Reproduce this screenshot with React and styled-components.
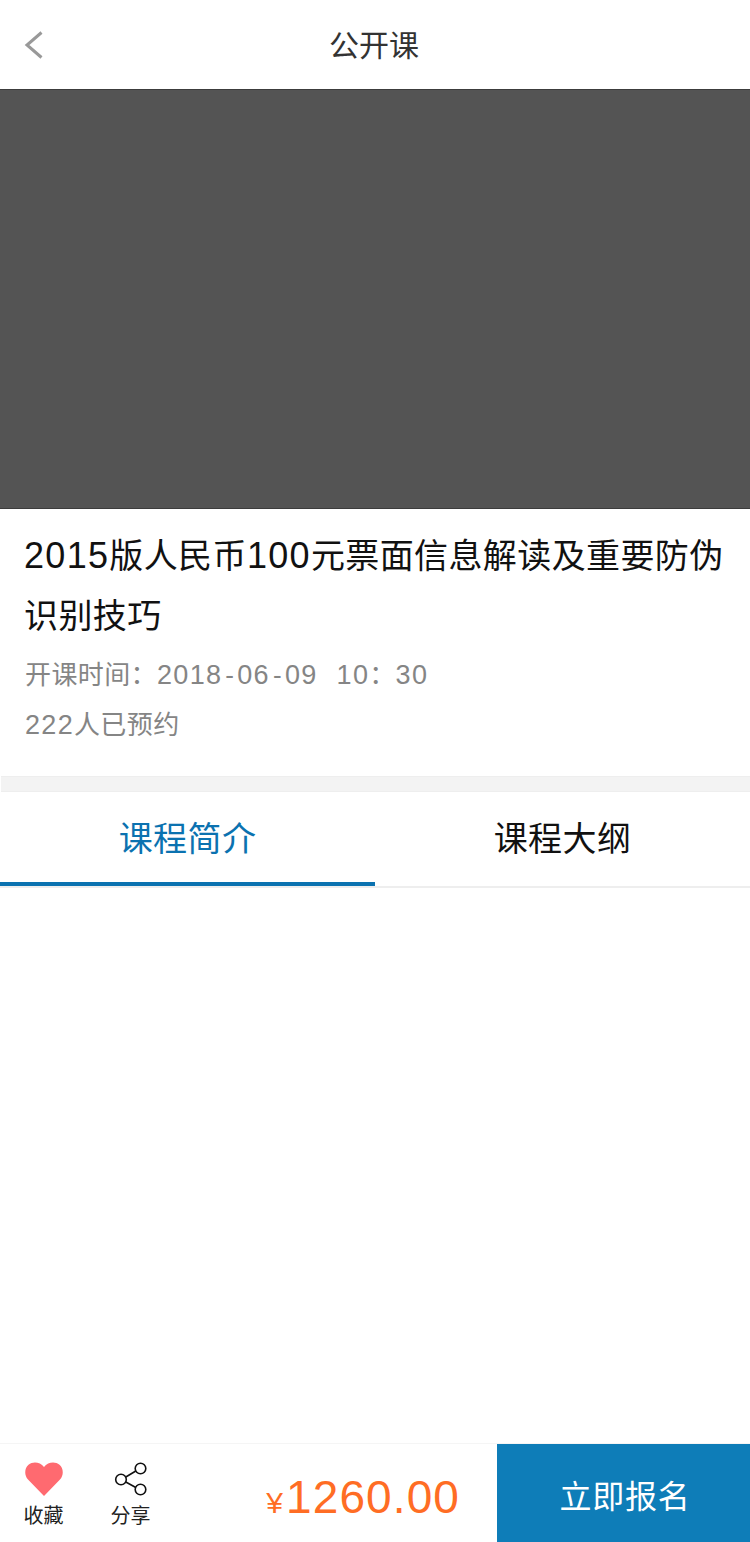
import styled, { createGlobalStyle } from "styled-components";

const GlobalStyle = createGlobalStyle`
    html, body {
        margin: 0;
        padding: 0;
        background: #fff;
    }
    body {
        font-family: "Liberation Sans", "Noto Sans CJK SC", sans-serif;
    }
`

function App() {
    return (
        <Page>
            <GlobalStyle />
            <NavBar>
                <BackIcon viewBox="0 0 20 30" fill="none">
                    <path d="M17.5 2.5 L3 15 L17.5 27.5" stroke="#999" strokeWidth="3" />
                </BackIcon>
                <NavTitle>公开课</NavTitle>
            </NavBar>
            <Hero />
            <Info>
                <Title>
                    <TitleNum>2015</TitleNum>版人民币<TitleNum>100</TitleNum>元票面信息解读及重要防伪识别技巧
                </Title>
                <Meta>
                    开课时间：<MetaNum>2018</MetaNum><Dash>-</Dash><MetaNum>06</MetaNum><Dash>-</Dash><MetaNum>09</MetaNum>
                    <Gap />
                    <MetaNum>10</MetaNum>：<MetaNum>30</MetaNum>
                </Meta>
                <Meta><MetaNum>222</MetaNum>人已预约</Meta>
            </Info>
            <Divider />
            <Tabs>
                <Tab $active>课程简介</Tab>
                <Tab>课程大纲</Tab>
            </Tabs>
            <Content />
            <BottomBar>
                <Action>
                    <svg width="38" height="34" viewBox="0 0 38 34">
                        <path d="M19 34 L3 17.5 C-1 13 -0.5 6 3.5 2.8 C8 -0.8 15 0 19 5 C23 0 30 -0.8 34.5 2.8 C38.5 6 39 13 35 17.5 Z" fill="#ff6a70" />
                    </svg>
                    <ActionLabel>收藏</ActionLabel>
                </Action>
                <Action>
                    <svg width="34" height="34" viewBox="0 0 34 34" fill="none" stroke="#111" strokeWidth="1.6">
                        <circle cx="7" cy="17.5" r="5.3" />
                        <circle cx="26.5" cy="6.5" r="5.3" />
                        <circle cx="26.5" cy="27.5" r="5.3" />
                        <path d="M11.8 15 L21.8 9 M11.8 20 L21.8 25.5" />
                    </svg>
                    <ActionLabel>分享</ActionLabel>
                </Action>
                <Price>
                    <Currency>¥</Currency>1260.00
                </Price>
                <SignUp>立即报名</SignUp>
            </BottomBar>
        </Page>
    );
}

const Page = styled.div`
    display: flex;
    flex-direction: column;
    width: 750px;
    height: 1542px;
    overflow: hidden;
`

const NavBar = styled.div`
    display: flex;
    align-items: center;
    justify-content: center;
    position: relative;
    height: 89px;
    flex-shrink: 0;
`

const BackIcon = styled.svg`
    position: absolute;
    left: 24px;
    top: 30px;
    width: 20px;
    height: 30px;
`

const NavTitle = styled.div`
    font-size: 30px;
    color: #333;
    padding: 0 2px 4px 0;
`

const Hero = styled.div`
    height: 420px;
    flex-shrink: 0;
    box-sizing: border-box;
    background: #545454;
    border-top: 1px solid #3c3c3c;
    border-bottom: 1px solid #3c3c3c;
`

const Info = styled.div`
    height: 267px;
    flex-shrink: 0;
    box-sizing: border-box;
    padding: 17px 24px 0;
`

const Title = styled.div`
    font-size: 34px;
    line-height: 60px;
    letter-spacing: 0.4px;
    color: #111;
    margin-bottom: 4px;
    margin-right: -4px;
`

const TitleNum = styled.span`
    font-size: 36px;
    letter-spacing: 1.3px;
`

const Meta = styled.div`
    font-size: 26px;
    line-height: 50px;
    letter-spacing: 0.4px;
    color: #858585;
    padding-left: 1px;
`

const MetaNum = styled.span`
    font-size: 27px;
    letter-spacing: 1.3px;
`

const Dash = styled.span`
    display: inline-block;
    width: 15px;
    text-align: center;
`

const Gap = styled.span`
    display: inline-block;
    width: 19px;
`

const Divider = styled.div`
    height: 16px;
    flex-shrink: 0;
    box-sizing: border-box;
    margin-left: 1px;
    background: #f3f3f3;
    border-top: 1px solid #eee;
    border-bottom: 1px solid #eee;
`

const Tabs = styled.div`
    display: flex;
    height: 96px;
    flex-shrink: 0;
    box-sizing: border-box;
    border-bottom: 2px solid #eee;
`

const Tab = styled.div`
    flex: 1;
    display: flex;
    align-items: center;
    justify-content: center;
    box-sizing: border-box;
    height: 94px;
    padding-bottom: 1px;
    font-size: 34px;
    letter-spacing: 0.4px;
    color: ${props => props.$active ? "#0b72b0" : "#111"};
    border-bottom: 4px solid ${props => props.$active ? "#0b72b0" : "transparent"};
`

const Content = styled.div`
    flex: 1;
`

const BottomBar = styled.div`
    display: flex;
    align-items: stretch;
    height: 99px;
    flex-shrink: 0;
    box-sizing: border-box;
    border-top: 1px solid #f5f5f5;
`

const Action = styled.div`
    width: 87px;
    display: flex;
    flex-direction: column;
    align-items: center;
    padding-top: 18px;
    box-sizing: border-box;
`

const ActionLabel = styled.div`
    font-size: 20px;
    line-height: 26px;
    margin-top: 7px;
    color: #222;
`

const Price = styled.div`
    flex: 1;
    display: flex;
    align-items: baseline;
    justify-content: flex-end;
    padding: 26px 37px 0 0;
    font-size: 46px;
    letter-spacing: 1.1px;
    color: #ff6d24;
`

const Currency = styled.span`
    font-size: 30px;
    margin-right: 2px;
`

const SignUp = styled.div`
    width: 253px;
    display: flex;
    align-items: center;
    justify-content: center;
    box-sizing: border-box;
    padding: 2px 0 0 3px;
    background: #0e7db8;
    color: #fff;
    font-size: 32px;
    letter-spacing: 0.8px;
`

export default App;
